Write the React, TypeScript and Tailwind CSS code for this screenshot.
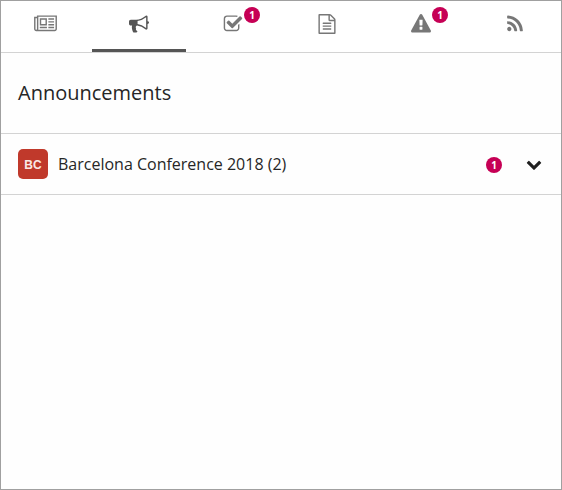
type Icon = { path: string; box: string; size: string };

const newspaper: Icon = {
  box: "0 0 2048 1792",
  size: "w-[23px] h-5",
  path: "M1024 512h-384v384h384v-384zm128 640v128h-640v-128h640zm0-768v640h-640v-640h640zm640 768v128h-512v-128h512zm0-256v128h-512v-128h512zm0-256v128h-512v-128h512zm0-256v128h-512v-128h512zm-1536 960v-960h-128v960q0 26 19 45t45 19 45-19 19-45zm1664 0v-1088h-1536v1088q0 33-11 64h1483q26 0 45-19t19-45zm128-1216v1216q0 80-56 136t-136 56h-1664q-80 0-136-56t-56-136v-1088h256v-128h1792z",
};
const bullhorn: Icon = {
  box: "0 0 1792 1792",
  size: "w-5 h-5",
  path: "M1664 640q53 0 90.5 37.5t37.5 90.5-37.5 90.5-90.5 37.5v384q0 52-38 90t-90 38q-417-347-812-380-58 19-91 66t-31 100.5 40 92.5q-20 33-23 65.5t6 58 33.5 55 48 50 61.5 50.5q-29 58-111.5 83t-168.5 11.5-132-55.5q-7-23-29.5-87.5t-32-94.5-23-89-15-101 3.5-98.5 22-110.5h-122q-66 0-113-47t-47-113v-192q0-66 47-113t113-47h480q435 0 896-384 52 0 90 38t38 90v384zm-128 604v-954q-394 302-768 343v270q377 42 768 341z",
};
const check: Icon = {
  box: "0 0 1792 1792",
  size: "w-5 h-5",
  path: "M1472 930v318q0 119-84.5 203.5t-203.5 84.5h-832q-119 0-203.5-84.5t-84.5-203.5v-832q0-119 84.5-203.5t203.5-84.5h832q63 0 117 25 15 7 18 23 3 17-9 29l-49 49q-10 10-23 10-3 0-9-2-23-6-45-6h-832q-66 0-113 47t-47 113v832q0 66 47 113t113 47h832q66 0 113-47t47-113v-254q0-13 9-22l64-64q10-10 23-10 6 0 12 3 20 8 20 29zm231-489l-814 814q-24 24-57 24t-57-24l-430-430q-24-24-24-57t24-57l110-110q24-24 57-24t57 24l263 263 647-647q24-24 57-24t57 24l110 110q24 24 24 57t-24 57z",
};
const file: Icon = {
  box: "0 0 1792 1792",
  size: "w-5 h-5",
  path: "M1596 380q28 28 48 76t20 88v1152q0 40-28 68t-68 28h-1344q-40 0-68-28t-28-68v-1600q0-40 28-68t68-28h896q40 0 88 20t76 48zm-444-244v376h376q-10-29-22-41l-313-313q-12-12-41-22zm384 1528v-1024h-416q-40 0-68-28t-28-68v-416h-768v1536h1280zm-1024-864q0-14 9-23t23-9h704q14 0 23 9t9 23v64q0 14-9 23t-23 9h-704q-14 0-23-9t-9-23v-64zm736 224q14 0 23 9t9 23v64q0 14-9 23t-23 9h-704q-14 0-23-9t-9-23v-64q0-14 9-23t23-9h704zm0 256q14 0 23 9t9 23v64q0 14-9 23t-23 9h-704q-14 0-23-9t-9-23v-64q0-14 9-23t23-9h704z",
};
const warning: Icon = {
  box: "0 0 1792 1792",
  size: "w-5 h-5",
  path: "M1024 1375v-190q0-14-9.5-23.5t-22.5-9.5h-192q-13 0-22.5 9.5t-9.5 23.5v190q0 14 9.5 23.5t22.5 9.5h192q13 0 22.5-9.5t9.5-23.5zm-2-374l18-459q0-12-10-19-13-11-24-11h-220q-11 0-24 11-10 7-10 21l17 457q0 10 10 16.5t24 6.5h185q14 0 23.5-6.5t10.5-16.5zm-14-934l768 1408q35 63-2 126-17 29-46.5 46t-63.5 17h-1536q-34 0-63.5-17t-46.5-46q-37-63-2-126l768-1408q17-31 47-49t65-18 65 18 47 49z",
};
const rss: Icon = {
  box: "0 0 1792 1792",
  size: "w-5 h-5",
  path: "M576 1344q0 80-56 136t-136 56-136-56-56-136 56-136 136-56 136 56 56 136zm512 123q2 28-17 48-18 21-47 21h-135q-25 0-43-16.5t-20-41.5q-22-229-184.5-391.5t-391.5-184.5q-25-2-41.5-20t-16.5-43v-135q0-29 21-47 17-17 43-17h5q160 13 306 80.5t259 181.5q114 113 181.5 259t80.5 306zm512 2q2 27-18 47-18 20-46 20h-143q-26 0-44.5-17.5t-19.5-42.5q-12-215-101-408.5t-231.5-336-336-231.5-408.5-102q-25-1-42.5-19.5t-17.5-43.5v-143q0-28 20-46 18-18 44-18h3q262 13 501.5 120t425.5 294q187 186 294 425.5t120 501.5z",
};
const chevron: Icon = {
  box: "0 0 1792 1792",
  size: "w-4 h-4",
  path: "M1683 808l-742 741q-19 19-45 19t-45-19l-742-741q-19-19-19-45.5t19-45.5l166-165q19-19 45-19t45 19l531 531 531-531q19-19 45-19t45 19l166 165q19 19 19 45.5t-19 45.5z",
};

function Glyph({ icon }: { icon: Icon }) {
  return (
    <svg viewBox={icon.box} className={`${icon.size} shrink-0`} fill="currentColor">
      <path d={icon.path} />
    </svg>
  );
}

function Badge() {
  return (
    <span className="flex h-4 w-4 items-center justify-center rounded-full bg-[#c60055] text-[10px] leading-none font-bold text-white">
      1
    </span>
  );
}

const tabs = [
  { name: "News", icon: newspaper },
  { name: "Announcements", icon: bullhorn, active: true },
  { name: "Tasks", icon: check, badge: true },
  { name: "Documents", icon: file },
  { name: "Alerts", icon: warning, badge: true },
  { name: "Feed", icon: rss },
];

export default function App() {
  return (
    <div className="h-[490px] w-[562px] overflow-hidden border border-[#a0a0a0] bg-[#fefefe] font-['Open_Sans',sans-serif] text-[#262626]">
      <nav className="-ml-[3px] flex h-[52px] w-[564px] border-b border-[#d3d3d3] bg-white">
        {tabs.map((tab) => (
          <button
            key={tab.name}
            aria-label={tab.name}
            className={`flex w-[94px] justify-center border-b-3 pt-[13px] ${
              tab.active ? "border-[#555] text-[#555]" : "border-transparent text-[#777]"
            }`}
          >
            <span className="relative flex">
              <Glyph icon={tab.icon} />
              {tab.badge && (
                <span className="absolute -top-[7px] left-[21px]">
                  <Badge />
                </span>
              )}
            </span>
          </button>
        ))}
      </nav>
      <h1 className="flex h-20 items-center px-[17px] text-xl">Announcements</h1>
      <div className="flex h-[62px] items-center border-y border-[#d3d3d3] pr-[19px] pl-[17px]">
        <span className="flex h-[30px] w-[30px] items-center justify-center rounded-[5px] bg-[#c0392b] pt-px font-['Liberation_Sans',sans-serif] text-xs font-bold text-[#fae8e6]">
          BC
        </span>
        <span className="ml-[10px] flex-1 text-base">Barcelona Conference 2018 (2)</span>
        <span className="mt-[2px]">
          <Badge />
        </span>
        <span className="ml-6 text-[#1f1f1f]">
          <Glyph icon={chevron} />
        </span>
      </div>
    </div>
  );
}
